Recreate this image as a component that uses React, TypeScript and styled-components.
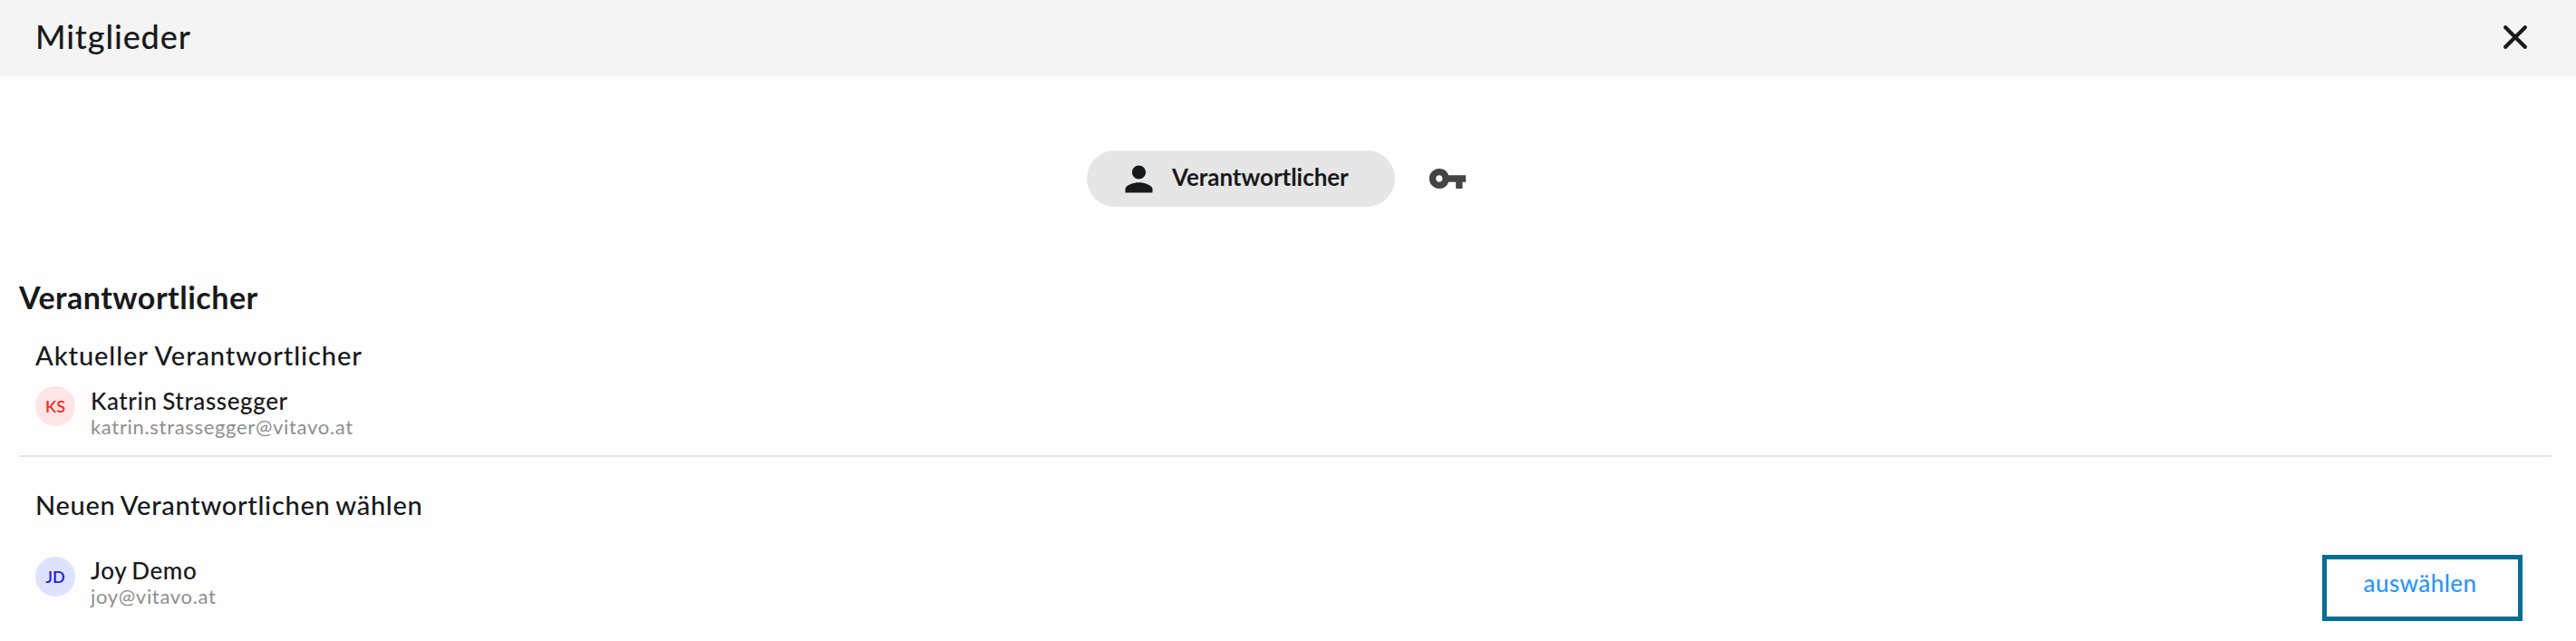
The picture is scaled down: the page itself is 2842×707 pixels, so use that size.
import React from 'react';
import styled, { createGlobalStyle } from 'styled-components';
import { MdPerson, MdVpnKey } from 'react-icons/md';

interface MemberProps {
	initials: string;
	name: string;
	email: string;
	color: string;
	background: string;
	offset?: number;
	children?: React.ReactNode;
}

function Member({
	initials,
	name,
	email,
	color,
	background,
	offset = 0,
	children,
}: MemberProps) {
	return (
		<MemberStyled>
			<Avatar $color={color} $background={background}>
				{initials}
			</Avatar>
			<MemberText $offset={offset}>
				<MemberName>{name}</MemberName>
				<MemberEmail>{email}</MemberEmail>
			</MemberText>
			{children}
		</MemberStyled>
	);
}

function App() {
	return (
		<>
			<GlobalStyle />
			<Header>
				<Title>Mitglieder</Title>
				<CloseButton aria-label="Schließen">
					<svg width="26" height="26" viewBox="0 0 26 26">
						<path d="M2.2 2.2L23.8 23.8M23.8 2.2L2.2 23.8" />
					</svg>
				</CloseButton>
			</Header>
			<Tabs>
				<ActiveTab>
					<MdPerson size={45} />
					<span>Verantwortlicher</span>
				</ActiveTab>
				<KeyTab aria-label="Zugriff">
					<MdVpnKey size={44} />
				</KeyTab>
			</Tabs>
			<Content>
				<SectionTitle>Verantwortlicher</SectionTitle>
				<Section>
					<SubTitle>Aktueller Verantwortlicher</SubTitle>
					<Member
						initials="KS"
						name="Katrin Strassegger"
						email="katrin.strassegger@vitavo.at"
						color="#ee2f2a"
						background="#fde4e5"
						offset={1}
					/>
				</Section>
				<Section $last>
					<SubTitle $last>Neuen Verantwortlichen wählen</SubTitle>
					<Member
						initials="JD"
						name="Joy Demo"
						email="joy@vitavo.at"
						color="#1a22f0"
						background="#dfe2ff"
					>
						<SelectButton>auswählen</SelectButton>
					</Member>
				</Section>
			</Content>
		</>
	);
}

const GlobalStyle = createGlobalStyle`
	* {
		box-sizing: border-box;
	}

	body {
		margin: 0;
		background: #fefefe;
		color: #18191b;
		font-family: Lato, 'Liberation Sans', sans-serif;
		font-weight: 500;
		overflow: hidden;
	}

	button {
		padding: 0;
		border: none;
		background: none;
		color: inherit;
		font-family: inherit;
		cursor: pointer;
	}
`;

const Header = styled.header`
	display: flex;
	justify-content: space-between;
	height: 84px;
	padding: 0 54px 0 39px;
	background: #f4f4f4;
`;

const Title = styled.h1`
	margin: 0;
	font-size: 36px;
	line-height: 80px;
	font-weight: 500;
	letter-spacing: 0.9px;
`;

const CloseButton = styled.button`
	display: flex;
	height: 26px;
	margin-top: 28px;

	path {
		fill: none;
		stroke: #18191b;
		stroke-width: 4.2;
		stroke-linecap: round;
	}
`;

const Tabs = styled.nav`
	display: flex;
	justify-content: center;
	align-items: center;
	gap: 36px;
	height: 62px;
	margin-top: 82px;
	padding-right: 24px;
`;

const ActiveTab = styled.button`
	display: flex;
	align-items: center;
	gap: 14px;
	width: 340px;
	height: 62px;
	padding-left: 35px;
	border-radius: 31px;
	background: #e6e6e6;
	font-size: 26px;
	font-weight: 700;

	span {
		line-height: 32px;
		margin-bottom: 4px;
		letter-spacing: -0.05px;
	}
`;

const KeyTab = styled.button`
	display: flex;
	color: #444;
`;

const Content = styled.main`
	padding: 80px 27px 0 21px;
`;

const SectionTitle = styled.h2`
	margin: 0;
	font-size: 34px;
	line-height: 40px;
	font-weight: 700;
	letter-spacing: 0.5px;
`;

const Section = styled.section<{ $last?: boolean }>`
	height: ${(props) => (props.$last ? 'auto' : '156px')};
	padding: ${(props) => (props.$last ? '35px 32px 0 18px' : '26px 32px 0 18px')};
	border-bottom: ${(props) => (props.$last ? 'none' : '2px solid #e4e4e4')};
`;

const SubTitle = styled.h3<{ $last?: boolean }>`
	margin: 0 0 ${(props) => (props.$last ? '39px' : '16px')};
	font-size: 29px;
	line-height: 36px;
	font-weight: 500;
	letter-spacing: ${(props) => (props.$last ? '0.7px' : '0.92px')};
	word-spacing: ${(props) => (props.$last ? '-1.5px' : '0')};
`;

const MemberStyled = styled.div`
	display: flex;
	align-items: flex-start;
`;

const Avatar = styled.div<{ $color: string; $background: string }>`
	width: 44px;
	height: 44px;
	margin-right: 17px;
	border-radius: 50%;
	background: ${(props) => props.$background};
	color: ${(props) => props.$color};
	font-size: 18px;
	line-height: 44px;
	font-weight: 600;
	text-align: center;
`;

const MemberText = styled.div<{ $offset: number }>`
	padding-top: ${(props) => props.$offset}px;
`;

const MemberName = styled.div`
	font-size: 26px;
	line-height: 30px;
	letter-spacing: 0.6px;
	word-spacing: -1.5px;
`;

const MemberEmail = styled.div`
	color: #8e8e8e;
	font-size: 22px;
	line-height: 28px;
	font-weight: 400;
	letter-spacing: 0.68px;
`;

const SelectButton = styled.button`
	width: 221px;
	height: 73px;
	margin: -2px 0 0 auto;
	padding: 0 5px 12px 0;
	border: 5px solid #046e92;
	color: #2e96f5;
	font-size: 26px;
	font-weight: 500;
	letter-spacing: 0.4px;
`;

export default App;
